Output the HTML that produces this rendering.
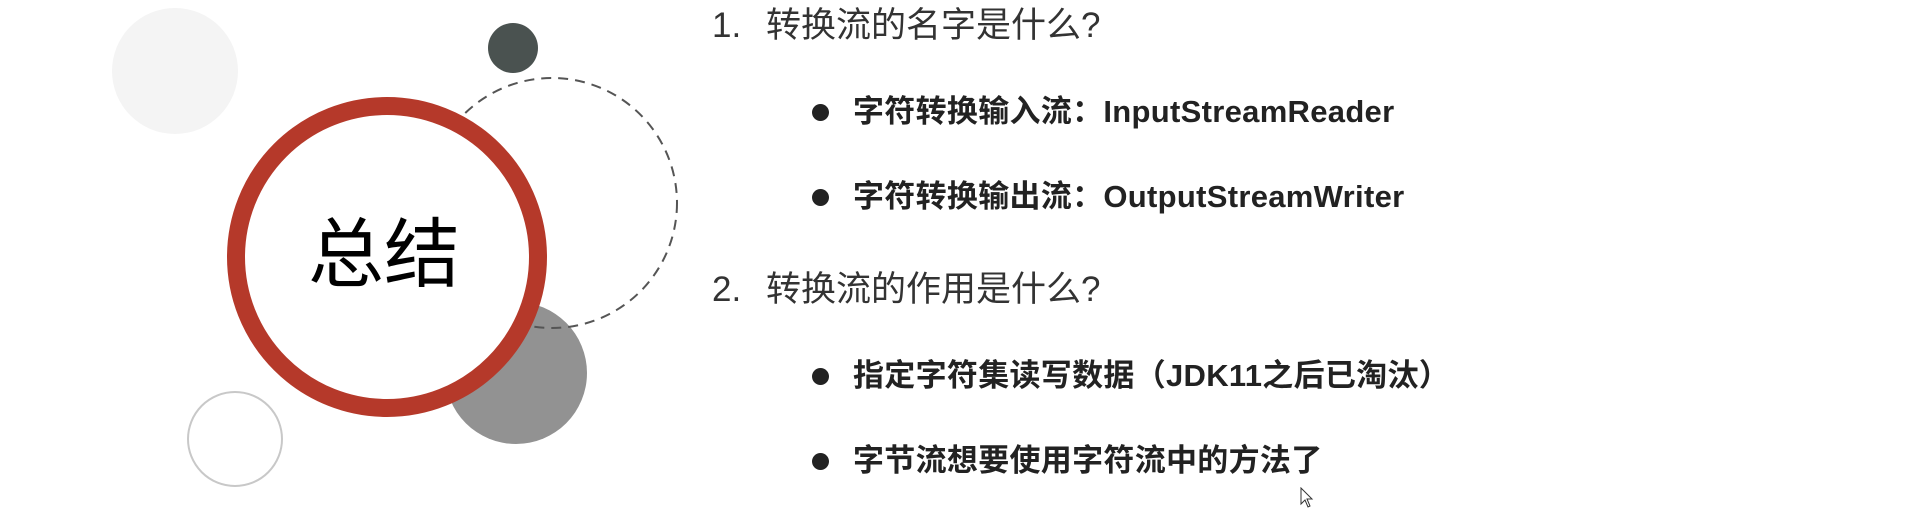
<!DOCTYPE html>
<html><head><meta charset="utf-8"><style>
html,body{margin:0;padding:0;background:#fff;}
body{width:1920px;height:532px;position:relative;overflow:hidden;font-family:"Liberation Sans","Noto Sans CJK SC",sans-serif;}
.t{position:absolute;white-space:nowrap;line-height:1;}
.h{font-size:35px;color:#333;}
.h span{display:inline-block;width:54px;}
.b{font-size:31px;font-weight:bold;color:#222;letter-spacing:0.3px;}
.dot{position:absolute;width:17px;height:17px;border-radius:50%;background:#222;}
</style></head><body>
<svg width="700" height="532" style="position:absolute;left:0;top:0">
<circle cx="175" cy="71" r="63" fill="#f4f4f4"/>
<circle cx="513" cy="48" r="25" fill="#4a5250"/>
<circle cx="516" cy="373" r="71" fill="#929292"/>
<circle cx="552" cy="203" r="125" fill="none" stroke="#555" stroke-width="2" stroke-dasharray="10 7"/>
<circle cx="387" cy="257" r="151" fill="#fff" stroke="#b5392a" stroke-width="18"/>
<circle cx="235" cy="439" r="47" fill="none" stroke="#c8c8c8" stroke-width="2"/>
</svg>
<div class="t" style="left:308px;top:218px;font-size:76px;color:#000;">总结</div>
<div class="t h" style="left:712px;top:8px;"><span>1.</span>转换流的名字是什么?</div>
<div class="dot" style="left:812px;top:104px"></div>
<div class="t b" style="left:853px;top:96px;">字符转换输入流：InputStreamReader</div>
<div class="dot" style="left:812px;top:189px"></div>
<div class="t b" style="left:853px;top:181px;">字符转换输出流：OutputStreamWriter</div>
<div class="t h" style="left:712px;top:272px;"><span>2.</span>转换流的作用是什么?</div>
<div class="dot" style="left:812px;top:368px"></div>
<div class="t b" style="left:853px;top:360px;">指定字符集读写数据（JDK11之后已淘汰）</div>
<div class="dot" style="left:812px;top:453px"></div>
<div class="t b" style="left:853px;top:445px;">字节流想要使用字符流中的方法了</div>
<svg width="14" height="22" style="position:absolute;left:1300px;top:487px" viewBox="0 0 14 22"><path d="M1 1 L1 17 L5 13 L8 20 L10 19 L7 12 L12 12 Z" fill="#fff" stroke="#333" stroke-width="1"/></svg>
</body></html>
